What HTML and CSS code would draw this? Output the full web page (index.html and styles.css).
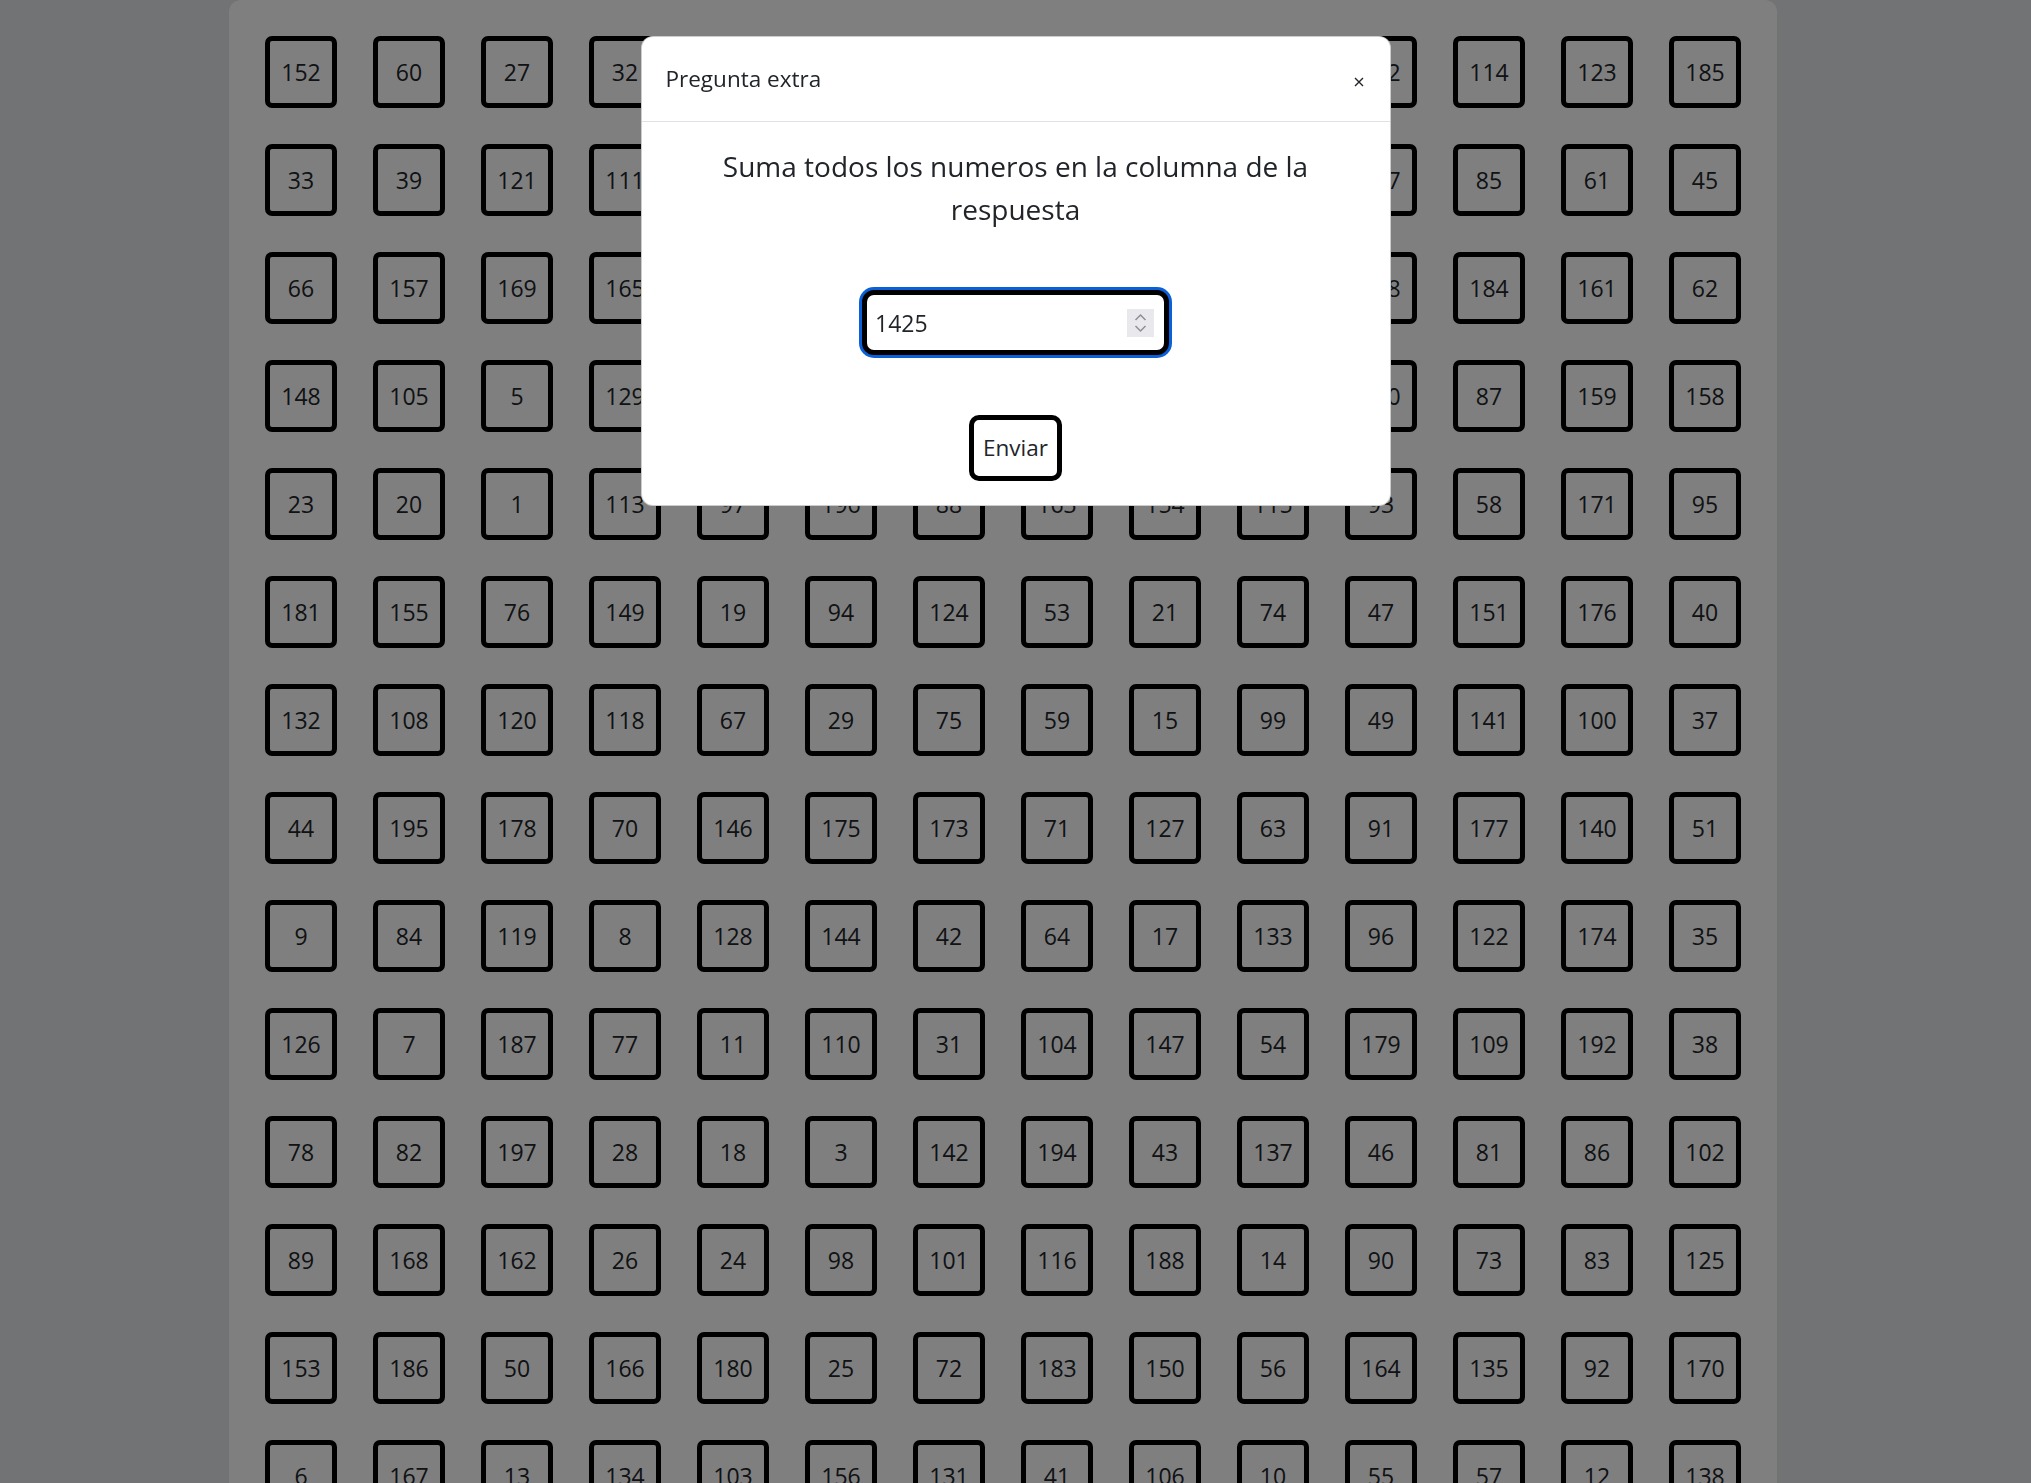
FILE: index.html
```html
<!DOCTYPE html>
<html lang="es">
<head>
    <meta charset="UTF-8">
    <meta name="viewport" content="width=device-width, initial-scale=1.0">
    <title>Pregunta extra</title>
    <link rel="stylesheet" href="styles.css">
</head>
<body>

    <div class="tablero" id="tablero"></div>

    <div class="modal-backdrop"></div>
    <div class="modal">
        <div class="modal-dialog">
            <div class="modal-content">
                <div class="modal-header">
                    <span class="modal-title">Pregunta extra</span>
                    <button class="btn-cerrar" aria-label="Cerrar">
                        <svg width="10" height="10" viewBox="0 0 10 10"><path d="M1 1L9 9M9 1L1 9" stroke="#212529" stroke-width="1.4" fill="none"/></svg>
                    </button>
                </div>
                <div class="modal-body">
                    <p class="pregunta">Suma todos los numeros en la columna de la respuesta</p>
                    <div class="campo">
                        <input type="text" class="respuesta" id="respuesta" value="1425">
                        <span class="spinner">
                            <svg width="27" height="28" viewBox="0 0 27 28"><path d="M8.5 11L13.5 6L18.5 11M8.5 17L13.5 22L18.5 17" stroke="#8e8e96" stroke-width="1.5" fill="none"/></svg>
                        </span>
                    </div>
                    <button class="btn-enviar" id="enviar">Enviar</button>
                </div>
            </div>
        </div>
    </div>

    <script>
        const filas = [
            [152, 60, 27, 32, 193, 4, 68, 143, 16, 189, 112, 114, 123, 185],
            [33, 39, 121, 111, 130, 2, 79, 145, 36, 191, 117, 85, 61, 45],
            [66, 157, 169, 165, 65, 160, 30, 182, 48, 22, 198, 184, 161, 62],
            [148, 105, 5, 129, 139, 69, 172, 34, 80, 107, 190, 87, 159, 158],
            [23, 20, 1, 113, 97, 196, 88, 163, 154, 115, 93, 58, 171, 95],
            [181, 155, 76, 149, 19, 94, 124, 53, 21, 74, 47, 151, 176, 40],
            [132, 108, 120, 118, 67, 29, 75, 59, 15, 99, 49, 141, 100, 37],
            [44, 195, 178, 70, 146, 175, 173, 71, 127, 63, 91, 177, 140, 51],
            [9, 84, 119, 8, 128, 144, 42, 64, 17, 133, 96, 122, 174, 35],
            [126, 7, 187, 77, 11, 110, 31, 104, 147, 54, 179, 109, 192, 38],
            [78, 82, 197, 28, 18, 3, 142, 194, 43, 137, 46, 81, 86, 102],
            [89, 168, 162, 26, 24, 98, 101, 116, 188, 14, 90, 73, 83, 125],
            [153, 186, 50, 166, 180, 25, 72, 183, 150, 56, 164, 135, 92, 170],
            [6, 167, 13, 134, 103, 156, 131, 41, 106, 10, 55, 57, 12, 138]
        ];

        const tablero = document.getElementById("tablero");

        filas.forEach(fila => {
            fila.forEach(numero => {
                const celda = document.createElement("div");
                celda.className = "celda";
                celda.textContent = numero;
                tablero.appendChild(celda);
            });
        });
    </script>
</body>
</html>
```

FILE: styles.css
```css
body {
    margin: 0;
    padding-right: 25px; /* hueco del scrollbar con el modal abierto */
    background-color: #e4e6ea;
    font-family: "Open Sans", "Noto Sans", sans-serif;
    color: #212529;
    overflow: hidden;
}
.tablero {
    box-sizing: border-box;
    width: 1548px;
    margin: 0 auto;
    padding: 36px;
    background-color: #fff;
    border-radius: 12px 12px 0 0;
    display: grid;
    grid-template-columns: repeat(14, 72px);
    grid-auto-rows: 72px;
    gap: 36px;
}
.celda {
    box-sizing: border-box;
    border: 5px solid #000;
    border-radius: 7px;
    display: flex;
    align-items: center;
    justify-content: center;
    font-size: 23px;
}
.modal-backdrop {
    position: fixed;
    inset: 0;
    background-color: rgba(0, 0, 0, 0.5);
}
.modal {
    position: fixed;
    inset: 0;
    display: flex;
    justify-content: center;
    align-items: flex-start;
}
.modal-dialog {
    width: 750px;
    margin-top: 36px;
}
.modal-content {
    background-color: #fff;
    border: 1.5px solid rgba(0, 0, 0, 0.2);
    border-radius: 12px;
}
.modal-header {
    display: flex;
    justify-content: space-between;
    align-items: center;
    padding: 24px;
    border-bottom: 1.5px solid #dee2e6;
}
.modal-title {
    font-size: 22.5px;
    line-height: 36px;
}
.btn-cerrar {
    display: flex;
    background: none;
    border: none;
    padding: 0;
    margin: 6px 1.5px 0 0;
    cursor: pointer;
}
.modal-body {
    padding: 23px 24px 24px;
    text-align: center;
}
.pregunta {
    margin: 0 0 59px;
    font-size: 28px;
    line-height: 43px;
}
.campo {
    box-sizing: border-box;
    width: 307px;
    height: 65px;
    margin: 0 auto 60px;
    padding: 0 10px 0 8px;
    display: flex;
    align-items: center;
    border: 5px solid #000;
    border-radius: 12px;
    box-shadow: 0 0 0 3px #0a60d9;
    background-color: #fff;
}
.respuesta {
    flex: 1;
    min-width: 0;
    border: none;
    outline: none;
    padding: 0;
    background: transparent;
    font-family: inherit;
    font-size: 23px;
    color: #212529;
}
.spinner {
    display: flex;
    background-color: #e9e9ed;
}
.btn-enviar {
    font-family: inherit;
    font-size: 22.5px;
    line-height: 36px;
    color: #212529;
    background-color: #fff;
    border: 5px solid #000;
    border-radius: 10px;
    padding: 10px 9px;
    cursor: pointer;
}
```
